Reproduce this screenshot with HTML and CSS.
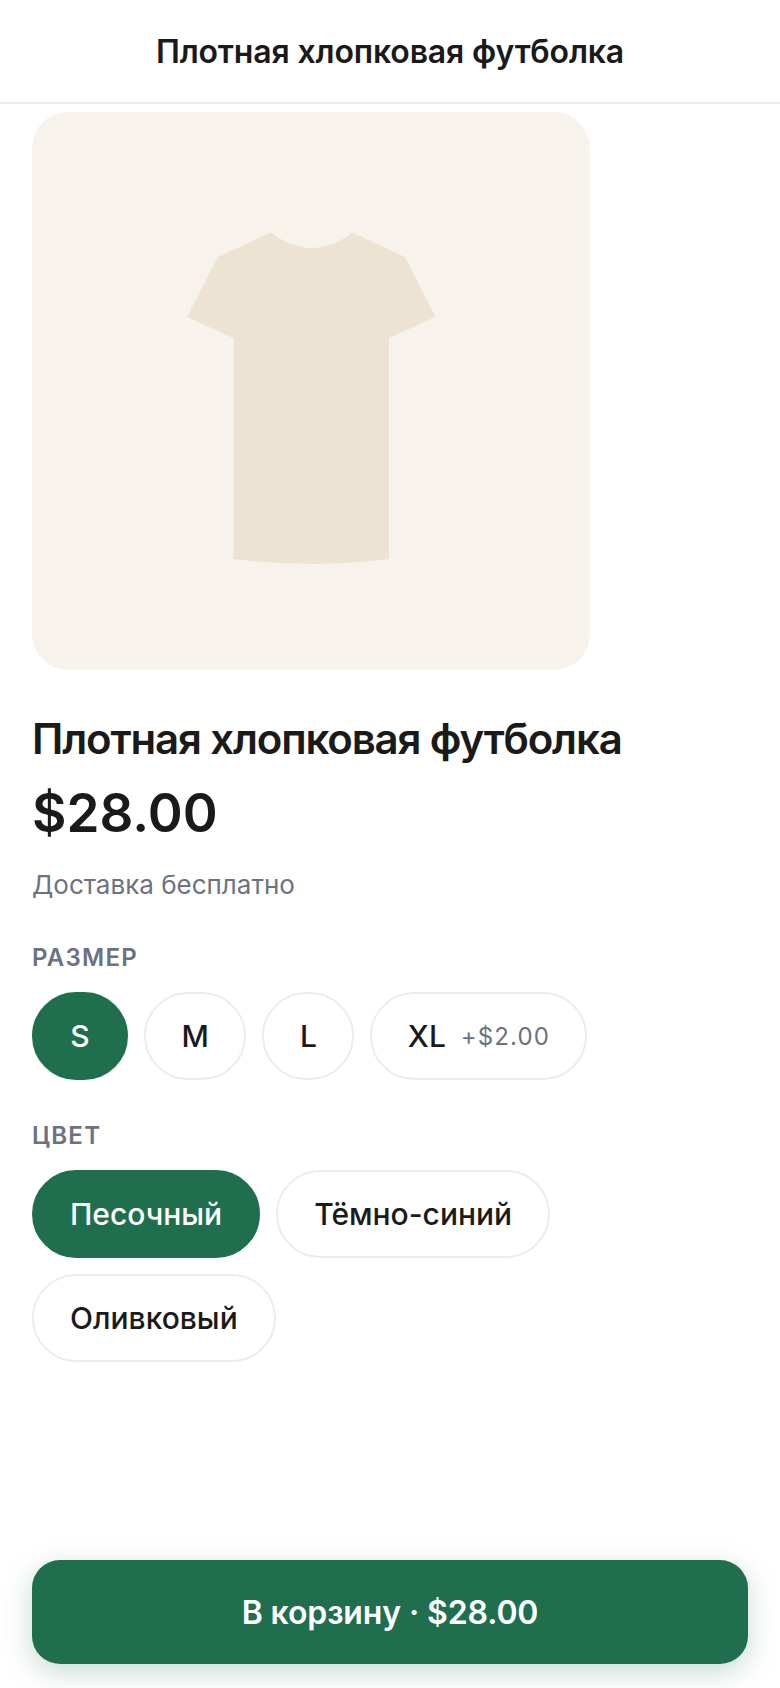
FILE: index.html
```html
<!DOCTYPE html>
<html lang="ru">
<head>
    <meta charset="UTF-8">
    <meta name="viewport" content="width=device-width, initial-scale=1.0">
    <title>Плотная хлопковая футболка</title>
    <link rel="stylesheet" href="styles.css">
</head>
<body>
    <div class="page">
        <header class="top-bar">Плотная хлопковая футболка</header>
        <main class="content">
            <div class="product-image">
                <svg class="tee" viewBox="0 0 558 558" aria-hidden="true">
                    <path d="M239 120.500 Q259 136 280 136 Q301 136 320 120.500 L373 145 L403.500 205 L357 226 L357 447 Q280 457 201.500 447 L201.500 226 L155 205 L186 145 Z"/>
                </svg>
            </div>
            <h1 class="product-name">Плотная хлопковая футболка</h1>
            <div class="price">$28.00</div>
            <p class="shipping">Доставка бесплатно</p>

            <div class="option-label">РАЗМЕР</div>
            <div class="pills sizes">
                <button type="button" class="pill pill-active">S</button>
                <button type="button" class="pill">M</button>
                <button type="button" class="pill">L</button>
                <button type="button" class="pill">XL <span class="extra">+$2.00</span></button>
            </div>

            <div class="option-label">ЦВЕТ</div>
            <div class="pills">
                <button type="button" class="pill pill-active">Песочный</button>
                <button type="button" class="pill">Тёмно-синий</button>
                <button type="button" class="pill">Оливковый</button>
            </div>
        </main>
        <footer class="cart-bar">
            <button type="button" class="cart-button">В корзину · $28.00</button>
        </footer>
    </div>
</body>
</html>
```

FILE: styles.css
```css
* {
    box-sizing: border-box;
}

body {
    margin: 0;
    background-color: #fff;
    font-family: Inter, 'Noto Sans', sans-serif;
    color: #1a1a1a;
}

.page {
    display: flex;
    flex-direction: column;
    height: 1688px;
    overflow: hidden;
}

.top-bar {
    height: 104px;
    flex-shrink: 0;
    display: flex;
    justify-content: center;
    align-items: center;
    border-bottom: 2px solid #ececef;
    font-size: 32px;
    font-weight: 600;
    letter-spacing: -0.15px;
}

.content {
    flex: 1;
    padding: 8px 32px 0;
}

.product-image {
    width: 558px;
    height: 558px;
    border-radius: 36px;
    background-color: #f7f2ec;
}

.tee {
    display: block;
    width: 100%;
    height: 100%;
    fill: #ece3d3;
}

.product-name {
    margin: 42px 0 0;
    font-size: 42px;
    line-height: 54px;
    font-weight: 600;
    letter-spacing: -1.15px;
}

.price {
    margin-top: 15px;
    font-size: 53px;
    line-height: 64px;
    font-weight: 600;
}

.shipping {
    margin: 23px 0 0;
    font-size: 26px;
    line-height: 34px;
    color: #6b7280;
}

.option-label {
    margin-top: 42px;
    font-size: 24px;
    line-height: 28px;
    font-weight: 600;
    letter-spacing: 1.25px;
    color: #6b7280;
}

.pills {
    display: flex;
    flex-wrap: wrap;
    gap: 16px;
    margin-top: 20px;
}

.pill {
    display: flex;
    align-items: center;
    height: 88px;
    padding: 0 36px;
    border: 2px solid #ececef;
    border-radius: 44px;
    background-color: #fff;
    font-family: inherit;
    font-size: 30px;
    font-weight: 500;
    color: #1a1a1a;
}

.sizes .pill {
    padding: 0 35.5px;
}

.pill-active {
    border-color: #1f6f4e;
    background-color: #1f6f4e;
    color: #fff;
}

.sizes .pill-active {
    min-width: 96px;
    justify-content: center;
}

.extra {
    margin-left: 15px;
    font-size: 24px;
    font-weight: 400;
    letter-spacing: 1.1px;
    color: #6b7280;
}

.cart-bar {
    flex-shrink: 0;
    padding: 0 32px 24px;
}

.cart-button {
    display: block;
    width: 100%;
    height: 104px;
    border: none;
    border-radius: 28px;
    background-color: #1f6f4e;
    box-shadow: 0 8px 28px rgba(31, 111, 78, 0.25);
    font-family: inherit;
    font-size: 32px;
    font-weight: 600;
    letter-spacing: -0.12px;
    color: #fff;
}
```
